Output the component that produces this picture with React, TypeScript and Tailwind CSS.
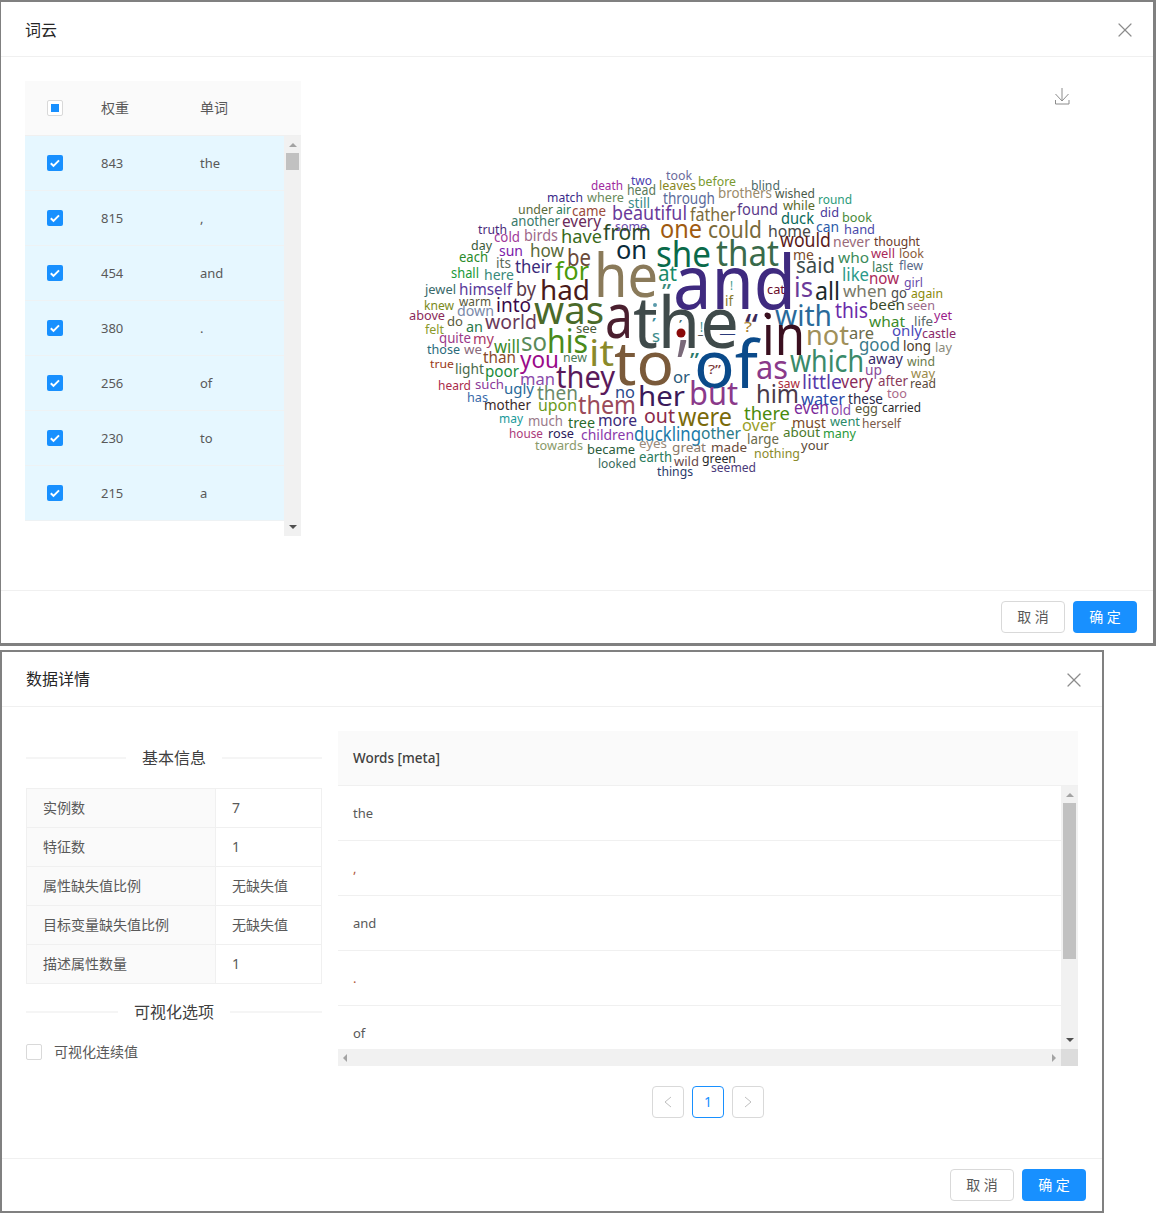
import { X } from 'lucide-react';

type Word = [string, number, number, number, number, string];

const WORDS: Word[] = [
  ['took', 666, 180, 26, 13, '#6b6b9b'], ['two', 631, 185, 21, 12, '#4a3fb0'], ['death', 591, 190, 32, 12, '#a02aa0'],
  ['head', 627, 195, 29, 14, '#5a7a5a'], ['leaves', 659, 190, 37, 13, '#87871e'], ['before', 698, 186, 38, 12, '#7a9a30'],
  ['blind', 751, 190, 29, 13, '#4a6a6a'], ['match', 547, 202, 36, 12, '#3a2a8a'], ['where', 587, 202, 37, 13, '#6a8a5a'],
  ['still', 628, 208, 22, 14, '#3a8a8a'], ['through', 663, 204, 52, 16, '#5a6a9a'], ['brothers', 718, 198, 54, 14, '#9a8a6a'],
  ['wished', 775, 198, 40, 13, '#4a5a4a'], ['round', 818, 204, 34, 13, '#2a9a7a'], ['under', 518, 214, 35, 13, '#5a6a3a'],
  ['air', 556, 214, 15, 13, '#2a7a5a'], ['came', 572, 216, 34, 15, '#9a4a3a'], ['beautiful', 612, 220, 75, 20, '#6a3a9a'],
  ['father', 690, 221, 46, 18, '#7a6a3a'], ['found', 737, 215, 41, 16, '#5a3a8a'], ['while', 783, 210, 32, 13, '#5a6a2a'],
  ['did', 820, 217, 19, 13, '#4a3a9a'], ['book', 842, 222, 30, 13, '#4a8a3a'], ['duck', 781, 224, 33, 16, '#0a6a5a'],
  ['another', 511, 226, 49, 14, '#3a7a6a'], ['every', 562, 227, 39, 16, '#6a2a5a'], ['can', 816, 232, 23, 14, '#2a5aaa'],
  ['hand', 844, 234, 31, 13, '#4a4aaa'], ['one', 660, 238, 42, 25, '#a05a10'], ['could', 708, 238, 54, 24, '#7a6a3a'],
  ['home', 768, 237, 43, 17, '#4a4a4a'], ['truth', 478, 234, 29, 13, '#4a2a7a'], ['some', 615, 231, 32, 13, '#6a4aaa'],
  ['cold', 494, 242, 26, 14, '#a03a9a'], ['birds', 524, 241, 34, 16, '#a06a8a'], ['have', 561, 243, 41, 18, '#3a6a1a'],
  ['from', 603, 240, 48, 21, '#2a4a2a'], ['would', 780, 247, 51, 20, '#5a1a1a'], ['never', 833, 247, 37, 14, '#9a6a7a'],
  ['thought', 874, 246, 46, 13, '#6a3a2a'], ['day', 471, 250, 21, 13, '#3a5a3a'], ['how', 530, 257, 34, 18, '#5a6a3a'],
  ['on', 616, 259, 31, 26, '#0a2a3a'], ['she', 656, 267, 55, 36, '#0a6a4a'], ['that', 716, 266, 63, 36, '#3a6a4a'],
  ['each', 459, 262, 29, 14, '#2a8a2a'], ['sun', 499, 256, 24, 14, '#7a1aaa'], ['be', 567, 266, 24, 24, '#6a4a3a'],
  ['me', 793, 260, 21, 14, '#7a4a2a'], ['said', 796, 273, 39, 22, '#3a4a4a'], ['who', 838, 263, 31, 15, '#3a8a5a'],
  ['well', 871, 258, 24, 13, '#aa2a5a'], ['look', 899, 258, 25, 13, '#8a5a3a'], ['its', 496, 268, 15, 15, '#5a6a5a'],
  ['their', 515, 273, 37, 18, '#3a2a7a'], ['for', 555, 280, 34, 26, '#4a9a0a'], ['he', 594, 297, 64, 60, '#8a7a5a'],
  ['at', 658, 281, 19, 22, '#1a8a6a'], ['and', 673, 309, 123, 74, '#3f2a7f'], ['last', 872, 272, 21, 14, '#3a7a5a'],
  ['flew', 899, 270, 24, 13, '#5a6a8a'], ['shall', 451, 278, 28, 14, '#1a9a3a'], ['here', 484, 280, 30, 15, '#3a8a7a'],
  ['like', 842, 281, 27, 18, '#2a9a8a'], ['now', 869, 284, 30, 16, '#aa2a5a'], ['girl', 904, 287, 19, 13, '#6a4aaa'],
  ['is', 794, 297, 19, 28, '#6a3a9a'], ['all', 815, 300, 25, 26, '#1a2a2a'], ['when', 843, 297, 44, 17, '#7a7a6a'],
  ['go', 891, 298, 16, 14, '#4a4a4a'], ['again', 911, 298, 32, 13, '#8a8a0a'], ['jewel', 425, 294, 31, 13, '#3a6a6a'],
  ['himself', 459, 295, 53, 16, '#5a3a9a'], ['by', 516, 296, 20, 20, '#5a3a4a'], ['had', 540, 300, 50, 28, '#4a1a1a'],
  ['!', 730, 290, 3, 13, '#3a9a8a'], ['cat', 767, 294, 18, 12, '#6a0a2a'], ['if', 725, 306, 8, 15, '#8a7a2a'],
  ['knew', 424, 310, 30, 12, '#7a8a1a'], ['warm', 459, 306, 32, 12, '#5a5a3a'], ['down', 457, 316, 37, 15, '#7a8aaa'],
  ['into', 496, 312, 35, 20, '#3a0a4a'], ['was', 534, 324, 70, 38, '#4a6a2a'], ['been', 869, 310, 36, 14, '#3a4a2a'],
  ['seen', 907, 310, 28, 13, '#9a6a8a'], ['this', 835, 318, 33, 21, '#6a2aaa'], ['with', 775, 326, 57, 29, '#2a6a9a'],
  ['above', 409, 320, 36, 12, '#8a2a5a'], ['do', 447, 326, 16, 13, '#5a5a3a'], ['an', 466, 332, 17, 15, '#2a7a4a'],
  ['world', 485, 329, 52, 19, '#6a3a5a'], ['what', 869, 327, 36, 15, '#3a8a2a'], ['life', 914, 326, 19, 13, '#5a6a6a'],
  ['yet', 934, 320, 18, 12, '#9a1a8a'], ['felt', 425, 334, 19, 12, '#8a9a2a'], ['quite', 439, 343, 32, 14, '#9a3a8a'],
  ['my', 473, 344, 21, 15, '#aa3a6a'], ['see', 576, 333, 21, 12, '#4a5a3a'], ['will', 494, 353, 26, 18, '#3a8a2a'],
  ['so', 521, 351, 26, 26, '#5a8a5a'], ['his', 547, 353, 41, 32, '#4a8a1a'], ['it', 589, 366, 25, 36, '#8a8a2a'],
  ['a', 605, 338, 28, 62, '#4a1f2f'], ['the', 633, 348, 106, 72, '#3f4a4a'], ['to', 614, 385, 60, 60, '#7a5a3a'],
  ['in', 762, 355, 43, 56, '#3a0f1f'], ['not', 806, 345, 43, 28, '#a0905a'], ['are', 849, 339, 25, 16, '#6a6a4a'],
  ['only', 892, 336, 30, 14, '#4a4aba'], ['castle', 922, 338, 34, 12, '#8a2a6a'], ['good', 859, 351, 41, 18, '#3a7a8a'],
  ['long', 903, 351, 28, 14, '#4a3a2a'], ['lay', 935, 352, 17, 13, '#8a8a7a'], ['those', 427, 354, 33, 12, '#2a6a7a'],
  ['we', 464, 354, 18, 13, '#8a6a7a'], ['than', 483, 363, 33, 16, '#8a4a2a'], ['you', 520, 368, 39, 24, '#9a0a8a'],
  ['new', 563, 362, 24, 12, '#4a7a5a'], ['which', 790, 372, 74, 30, '#3a8a6a'], ['away', 868, 364, 35, 15, '#3a2a6a'],
  ['wind', 907, 366, 28, 13, '#6a7a4a'], ['up', 865, 375, 17, 15, '#8a4a9a'], ['way', 911, 378, 24, 13, '#9a8a4a'],
  ['true', 430, 368, 24, 11, '#9a3a1a'], ['light', 455, 374, 29, 15, '#4a6a4a'], ['poor', 485, 377, 34, 16, '#1a8a3a'],
  ['man', 520, 385, 35, 17, '#8a4aaa'], ['they', 556, 388, 59, 30, '#5a1a5a'], ['or', 673, 383, 17, 17, '#2a5a7a'],
  ['of', 694, 388, 64, 66, '#0a4a8a'], ['as', 756, 379, 32, 32, '#8a3a8a'], ['?”', 708, 374, 13, 13, '#7a3a3a'],
  ['little', 802, 389, 40, 20, '#5a3aaa'], ['very', 841, 388, 32, 18, '#8a2a5a'], ['after', 878, 386, 30, 14, '#8a3a5a'],
  ['read', 910, 388, 26, 13, '#5a4a3a'], ['heard', 438, 390, 33, 13, '#aa2a4a'], ['such', 475, 389, 29, 13, '#8a3a9a'],
  ['ugly', 504, 394, 30, 15, '#2a6a9a'], ['then', 537, 400, 41, 20, '#6a8a6a'], ['no', 615, 398, 20, 17, '#2a4a8a'],
  ['her', 638, 406, 47, 28, '#3a1a5a'], ['but', 689, 405, 49, 32, '#8a3a8a'], ['him', 756, 403, 43, 26, '#4a3a4a'],
  ['saw', 778, 388, 22, 12, '#aa2a3a'], ['has', 467, 402, 21, 13, '#3a6aaa'], ['mother', 484, 410, 47, 14, '#3a2a2a'],
  ['upon', 538, 411, 39, 17, '#6a9a1a'], ['them', 578, 414, 58, 26, '#9a4a5a'], ['water', 801, 405, 44, 17, '#2a4aaa'],
  ['these', 848, 404, 35, 15, '#2a2a4a'], ['too', 887, 398, 20, 13, '#aa6a8a'], ['there', 744, 420, 46, 18, '#4a8a0a'],
  ['even', 794, 414, 35, 18, '#7a2a9a'], ['old', 831, 415, 20, 14, '#8a4aaa'], ['egg', 855, 413, 23, 13, '#5a5a3a'],
  ['carried', 882, 412, 39, 12, '#2a2a2a'], ['may', 499, 423, 24, 12, '#1a9a9a'], ['much', 528, 426, 35, 14, '#9a7a8a'],
  ['tree', 568, 428, 27, 14, '#2a6a2a'], ['more', 598, 426, 39, 17, '#3a2a7a'], ['out', 644, 423, 31, 19, '#8a2a4a'],
  ['were', 678, 426, 54, 25, '#7a6a0a'], ['over', 742, 431, 34, 17, '#9aa02a'], ['must', 792, 428, 34, 15, '#7a4a2a'],
  ['went', 830, 426, 30, 13, '#2a8a6a'], ['herself', 862, 428, 39, 12, '#7a5a4a'], ['house', 509, 438, 34, 13, '#aa3a7a'],
  ['rose', 548, 438, 26, 13, '#2a1a5a'], ['children', 581, 440, 53, 15, '#8a3aaa'], ['duckling', 634, 441, 67, 19, '#1a7aaa'],
  ['other', 701, 439, 40, 16, '#2a7a8a'], ['large', 747, 444, 32, 15, '#6a6a4a'], ['about', 783, 437, 37, 13, '#4a7a2a'],
  ['many', 823, 438, 33, 12, '#2a9a3a'], ['towards', 535, 450, 48, 12, '#8a9a6a'], ['eyes', 639, 448, 28, 13, '#9a8a7a'],
  ['great', 672, 452, 34, 13, '#8a7a6a'], ['made', 711, 452, 36, 13, '#6a4a3a'], ['became', 587, 454, 48, 13, '#2a5a3a'],
  ['nothing', 754, 458, 46, 13, '#8a8a2a'], ['your', 801, 450, 28, 13, '#5a4a3a'], ['earth', 639, 462, 33, 14, '#2a7a5a'],
  ['looked', 598, 468, 38, 13, '#3a6a5a'], ['wild', 674, 466, 25, 13, '#6a4a4a'], ['green', 702, 463, 34, 13, '#2a2a2a'],
  ['things', 657, 476, 36, 13, '#2a3a6a'], ['seemed', 711, 472, 45, 13, '#4a3a7a'],
  // stray punctuation the tokenizer kept
  ['“', 745, 336, 13, 30, '#3a2a5a'], ['?', 744, 332, 8, 15, '#a8802a'], ['s', 652, 342, 8, 16, '#3a8a8a'],
  ['”', 662, 298, 9, 19, '#3a8a7a'], ['’', 677, 390, 10, 70, '#7a6a7a'], ['”', 690, 367, 9, 20, '#2a7a6a'],
  ['!', 700, 332, 3, 14, '#2a8a8a'], ['’', 652, 328, 4, 14, '#3a8a9a'], ['’', 679, 328, 3, 10, '#3a6a6a'],
  ['_', 698, 334, 5, 10, '#1a1a1a'], ['_', 720, 333, 15, 14, '#2a3a7a'],
];

const WEIGHTS = [['843', 'the'], ['815', ','], ['454', 'and'], ['380', '.'], ['256', 'of'], ['230', 'to'], ['215', 'a']];
const INFO = [['实例数', '7'], ['特征数', '1'], ['属性缺失值比例', '无缺失值'], ['目标变量缺失值比例', '无缺失值'], ['描述属性数量', '1']];
const VALUES: [string, string][] = [['the', 'text-[#595959]'], [',', 'text-[#b0583a]'], ['and', 'text-[#595959]'], ['.', 'text-[#b0583a]'], ['of', 'text-[#595959]']];

function Close() {
  return <X className="w-6 h-6 mt-[2px] text-[#8c8c8c]" strokeWidth={1.2} />;
}

function Check() {
  return (
    <span className="w-4 h-4 rounded-[2px] bg-[#1890ff] flex items-center justify-center shrink-0">
      <svg viewBox="0 0 16 16" className="w-4 h-4">
        <path d="M3.800 8.200l2.700 2.700 5.500-5.500" fill="none" stroke="#fff" strokeWidth="2" />
      </svg>
    </span>
  );
}

function Footer() {
  return (
    <div className="h-[53px] shrink-0 border-t border-[#f0f0f0] pt-[10px] pr-4 flex justify-end gap-2">
      <button className="w-16 h-8 rounded border border-[#d9d9d9] bg-white text-sm text-[#595959]">取 消</button>
      <button className="w-16 h-8 rounded bg-[#1890ff] text-sm text-white">确 定</button>
    </div>
  );
}

function ScrollV({ thumb }: { thumb: string }) {
  return (
    <div className="w-[17px] shrink-0 bg-[#f1f1f1] flex flex-col items-center">
      <svg viewBox="0 0 8 4" className="w-2 h-1 mt-[7px] shrink-0"><path d="M4 0l4 4H0z" fill="#a3a3a3" /></svg>
      <div className={`w-[13px] mt-[6px] bg-[#c1c1c1] ${thumb}`} />
      <svg viewBox="0 0 8 4" className="w-2 h-1 mt-auto mb-[7px] shrink-0"><path d="M0 0h8L4 4z" fill="#505050" /></svg>
    </div>
  );
}

function Divider({ title, side }: { title: string; side: string }) {
  return (
    <div className="h-6 flex items-center justify-between text-base text-[#404040]">
      <span className={`h-[2px] bg-[#f5f5f5] ${side}`} />
      <span>{title}</span>
      <span className={`h-[2px] bg-[#f5f5f5] ${side}`} />
    </div>
  );
}

function WordCloud() {
  return (
    <svg width="570" height="330" viewBox="400 160 570 330" className="ml-[99px] mt-[79px]">
      {WORDS.map(([text, x, y, w, size, color], i) => (
        <text
          key={i}
          x={x}
          y={y}
          fontSize={size}
          fill={color}
          textLength={w}
          lengthAdjust="spacingAndGlyphs"
          fontFamily="'Noto Sans', sans-serif"
        >
          {text}
        </text>
      ))}
      <circle cx="655" cy="305" r="2" fill="#5a9aaa" />
      <circle cx="767" cy="315" r="2.500" fill="#3a0f1f" />
      <circle cx="681" cy="333" r="4.500" fill="#8a0a0a" />
    </svg>
  );
}

export default function App() {
  return (
    <div className="w-[1156px] bg-white text-sm text-[#595959]" style={{ fontFamily: "'Noto Sans', 'Noto Sans CJK SC', sans-serif" }}>
      {/* word cloud dialog */}
      <div className="h-[646px] flex flex-col border-t-2 border-l border-r-[3px] border-b-[3px] border-[#808080]">
        <div className="h-[55px] shrink-0 border-b border-[#f0f0f0] pl-6 pr-4 flex items-center justify-between">
          <span className="text-base text-[#262626] mt-[2px]">词云</span>
          <Close />
        </div>
        <div className="flex-1 flex pl-6 pt-6 relative">
          <div className="w-[276px] h-[455px] shrink-0 flex flex-col">
            <div className="h-[55px] shrink-0 bg-[#fafafa] border-b border-[#f0f0f0] flex items-center text-[#595959]">
              <div className="w-[76px] pl-[22px]">
                <span className="w-4 h-4 rounded-[2px] border border-[#d9d9d9] bg-white flex items-center justify-center">
                  <span className="w-2 h-2 bg-[#1890ff]" />
                </span>
              </div>
              <span className="w-[99px]">权重</span>
              <span>单词</span>
            </div>
            <div className="flex-1 flex min-h-0">
              <div className="flex-1">
                {WEIGHTS.map(([weight, word]) => (
                  <div key={weight} className="h-[55px] bg-[#e6f7ff] border-b border-[#eef2f4] flex items-center text-[13px]">
                    <div className="w-[76px] pl-[22px]"><Check /></div>
                    <span className="w-[99px]">{weight}</span>
                    <span>{word}</span>
                  </div>
                ))}
              </div>
              <ScrollV thumb="h-[17px]" />
            </div>
          </div>
          <WordCloud />
          <svg viewBox="0 0 18 18" className="absolute right-[82px] top-[30px] w-[18px] h-[18px]" fill="none" stroke="#8c8c8c" strokeWidth="1">
            <path d="M9 1v13M2.500 7L9 14l6.500-7M2.500 13v4h13.500v-4" />
          </svg>
        </div>
        <Footer />
      </div>

      {/* data details dialog */}
      <div className="w-[1104px] h-[563px] mt-1 flex flex-col border-2 border-[#808080]">
        <div className="h-[55px] shrink-0 border-b border-[#f0f0f0] pl-6 pr-4 flex items-center justify-between">
          <span className="text-base text-[#262626]">数据详情</span>
          <Close />
        </div>
        <div className="flex-1 flex pl-6 pt-6 gap-4 min-h-0">
          <div className="w-[296px] shrink-0 pt-[15px]">
            <Divider title="基本信息" side="w-[100px]" />
            <div className="mt-[18px] border-t border-l border-r border-[#f0f0f0]">
              {INFO.map(([label, value]) => (
                <div key={label} className="h-[39px] flex border-b border-[#f0f0f0]">
                  <div className="w-[189px] bg-[#fafafa] border-r border-[#f0f0f0] pl-4 flex items-center">{label}</div>
                  <div className="pl-4 flex items-center">{value}</div>
                </div>
              ))}
            </div>
            <div className="mt-4">
              <Divider title="可视化选项" side="w-[92px]" />
            </div>
            <div className="mt-4 h-6 flex items-center gap-3">
              <span className="w-4 h-4 rounded-[2px] border border-[#d9d9d9] bg-white" />
              <span>可视化连续值</span>
            </div>
          </div>
          <div className="w-[740px] shrink-0">
            <div className="h-[55px] bg-[#fafafa] border-b border-[#f0f0f0] pl-[15px] pt-[2px] flex items-center font-medium text-[13.500px] text-[#404040]">Words [meta]</div>
            <div className="h-[263px] flex">
              <div className="flex-1 overflow-hidden">
                {VALUES.map(([value, color]) => (
                  <div key={value} className={`h-[55px] shrink-0 border-b border-[#f0f0f0] pl-[15px] flex items-center text-[13px] ${color}`}>{value}</div>
                ))}
              </div>
              <ScrollV thumb="h-[156px]" />
            </div>
            <div className="h-[17px] flex">
              <div className="flex-1 bg-[#f1f1f1] flex items-center justify-between px-[5px]">
                <svg viewBox="0 0 4 8" className="w-1 h-2"><path d="M4 0v8L0 4z" fill="#a3a3a3" /></svg>
                <svg viewBox="0 0 4 8" className="w-1 h-2"><path d="M0 0v8l4-4z" fill="#a3a3a3" /></svg>
              </div>
              <div className="w-[17px] bg-[#dcdcdc]" />
            </div>
            <div className="mt-5 flex justify-center gap-2">
              <span className="w-8 h-8 rounded border border-[#d9d9d9] flex items-center justify-center">
                <svg viewBox="0 0 10 12" className="w-[10px] h-3" fill="none" stroke="#bfbfbf"><path d="M8 1L2 6l6 5" /></svg>
              </span>
              <span className="w-8 h-8 rounded border border-[#1890ff] text-[#1890ff] flex items-center justify-center">1</span>
              <span className="w-8 h-8 rounded border border-[#d9d9d9] flex items-center justify-center">
                <svg viewBox="0 0 10 12" className="w-[10px] h-3" fill="none" stroke="#bfbfbf"><path d="M2 1l6 5-6 5" /></svg>
              </span>
            </div>
          </div>
        </div>
        <Footer />
      </div>
    </div>
  );
}
